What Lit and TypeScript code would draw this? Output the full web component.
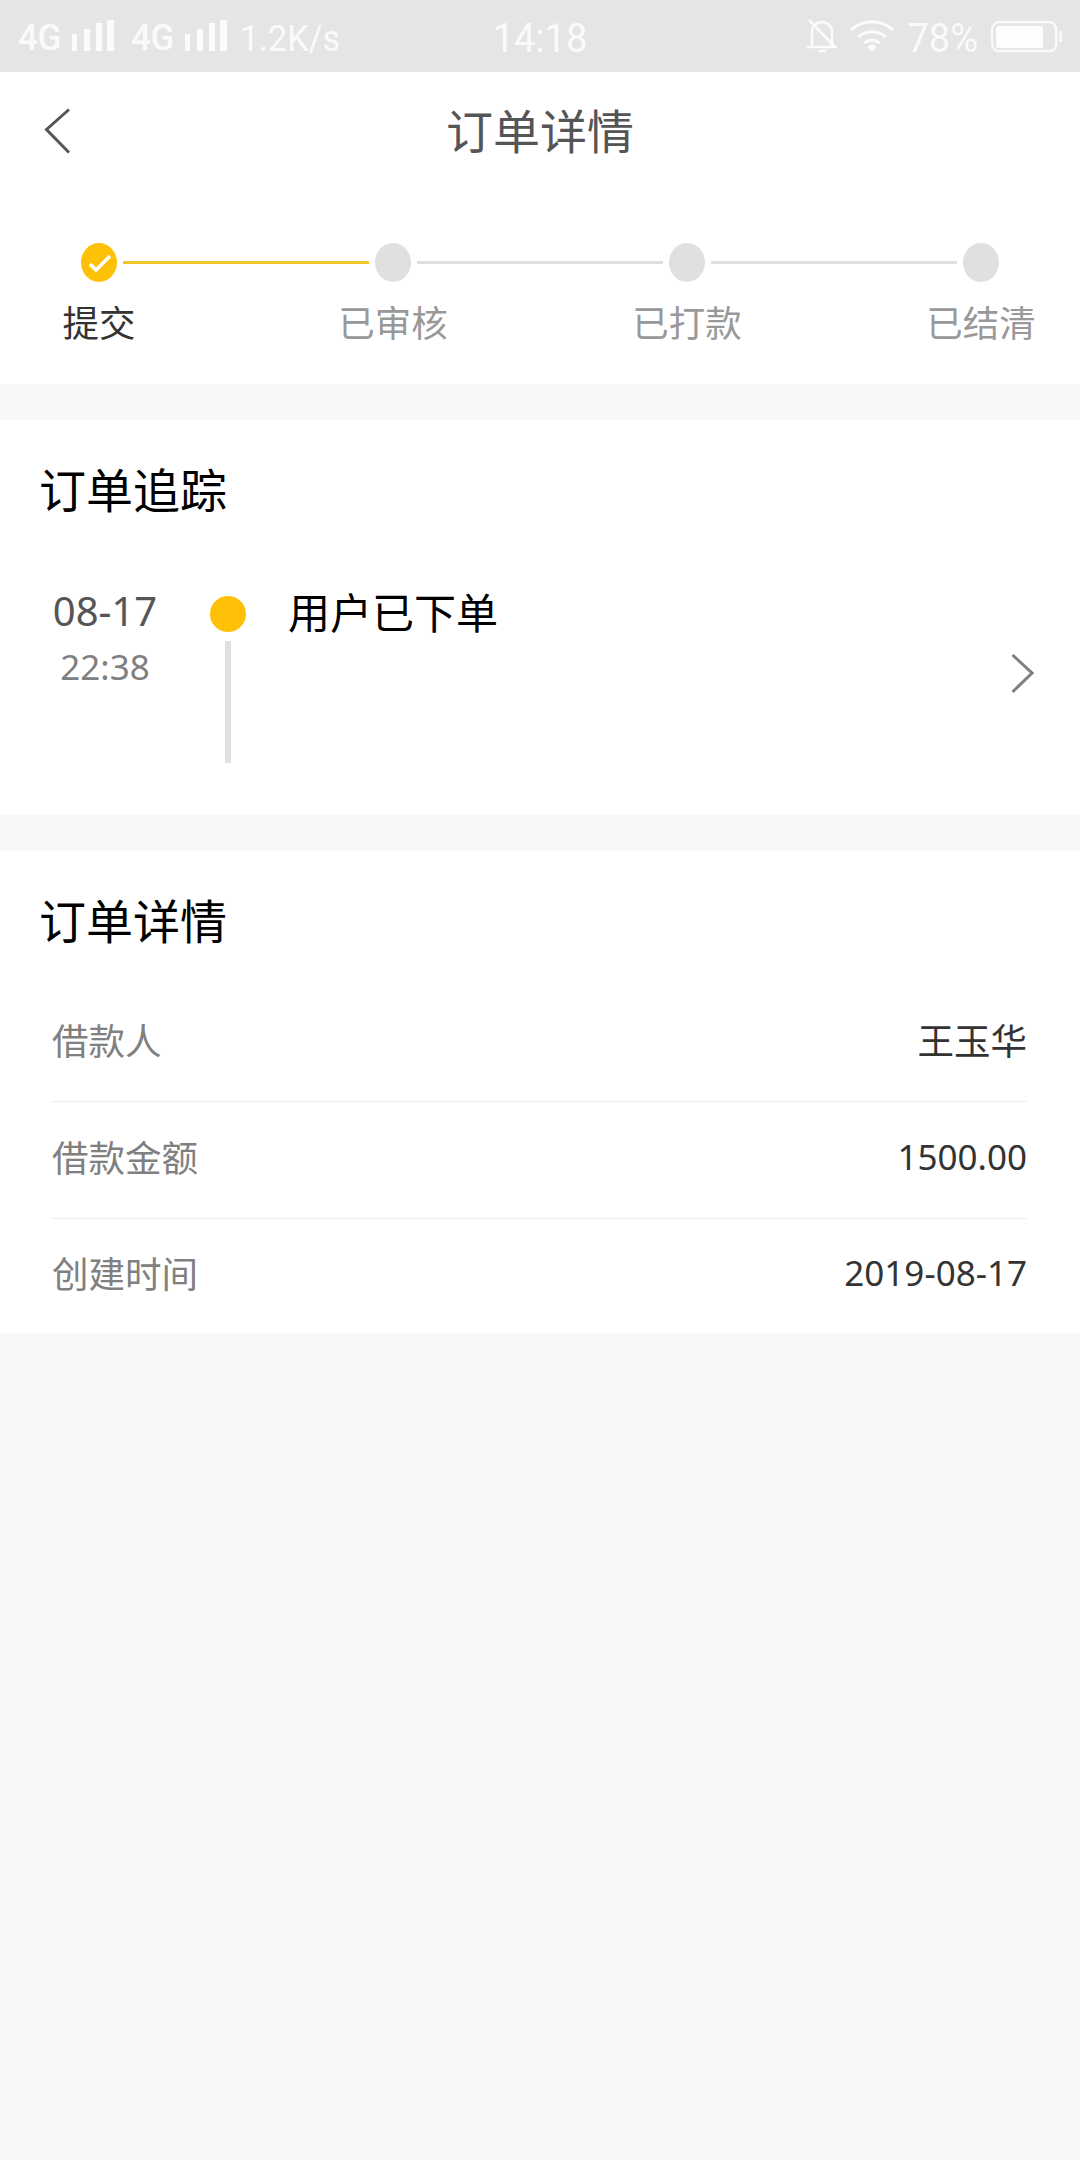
import { LitElement, html, css, svg } from "lit";
import { customElement } from "lit/decorators.js";

const bars = svg`<svg class="bars" viewBox="0 0 42 32" width="42" height="32"><path fill="#fff" fill-opacity=".85" d="M0 15h5v17H0zM12 10h6v22h-6zM24 4h6v28h-6zM35 1h7v31h-7z"/></svg>`;

const steps = [
  { label: "提交", done: true },
  { label: "已审核", done: false },
  { label: "已打款", done: false },
  { label: "已结清", done: false },
];

const details = [
  { k: "借款人", v: "王玉华" },
  { k: "借款金额", v: "1500.00" },
  { k: "创建时间", v: "2019-08-17" },
];

@customElement("app-root")
export class AppRoot extends LitElement {
  static styles = css`
    :host {
      display: block;
      width: 1080px;
      height: 2160px;
      background: #f8f8f8;
      font-family: "Noto Sans", "Noto Sans CJK SC", sans-serif;
      overflow: hidden;
    }
    .status {
      height: 72px;
      background: #e5e5e5;
      display: grid;
      grid-template-columns: 1fr auto 1fr;
      align-items: center;
      font-family: Roboto, "Noto Sans", sans-serif;
      color: rgba(255, 255, 255, 0.85);
    }
    .s-left { display: flex; align-items: center; padding-left: 18px; }
    .net { font-weight: 500; font-size: 35px; width: 44px; letter-spacing: -0.5px; display: inline-block; transform: scaleY(1.08); margin-top: 3px; }
    .bars { margin-left: 10px; margin-top: -2px; }
    .b2 { margin-left: 17px; }
    .speed { margin-left: 13px; font-size: 34px; transform: scaleY(1.08); margin-top: 3px; }
    .clock { font-size: 38px; transform: scaleY(1.08); margin-top: 3px; }
    .s-right { display: flex; align-items: center; justify-content: flex-end; padding-right: 17px; }
    .pct { font-size: 38px; margin: 3px 0 0 12px; transform: scaleY(1.05); }
    .bell { margin-right: 11px; }
    .batt { margin-left: 13px; margin-top: 1px; }

    .top { background: #fff; height: 312px; }
    .nav {
      height: 118px;
      display: grid;
      grid-template-columns: 1fr auto 1fr;
      align-items: center;
    }
    .back { margin-left: 44px; display: block; }
    .nav-title { font-size: 47px; line-height: 58px; color: #555; font-weight: 400; }

    .steps {
      display: grid;
      grid-template-columns: 36px 1fr 36px 1fr 36px 1fr 36px;
      padding: 53px 81px 0;
      align-items: center;
    }
    .dot {
      width: 36px;
      height: 39px;
      border-radius: 50%;
      background: #e0e0e0;
      display: flex;
      align-items: center;
      justify-content: center;
    }
    .dot.on { background: #ffc107; }
    .line { height: 3px; background: #e0e0e0; margin: 0 6px; }
    .line.on { background: #f0c62c; }
    .lab {
      grid-row: 2;
      justify-self: center;
      white-space: nowrap;
      font-size: 36.5px;
      line-height: 48px;
      color: #999;
      margin-top: 17px;
    }
    .lab.on { color: #333; }

    .card { background: #fff; margin-top: 36px; }
    .card-title { font-size: 47px; line-height: 58px; color: #000; }
    .track { padding: 41px 0 52px 39px; }
    .tr-row { display: flex; align-items: flex-start; margin-top: 72px; }
    .when { width: 132px; text-align: center; }
    .date { font-size: 40px; line-height: 40px; color: #555; }
    .time { font-size: 35px; line-height: 40px; color: #808080; margin-top: 16px; }
    .axis { width: 36px; margin-left: 39px; padding-top: 5px; display: flex; flex-direction: column; align-items: center; }
    .adot { width: 36px; height: 36px; border-radius: 50%; background: #ffc107; }
    .aline { width: 6px; height: 122px; background: #e0e0e0; margin-top: 9px; }
    .what { flex: 1; margin-left: 42px; font-size: 42px; line-height: 44px; color: #000; }
    .chev { margin: 63px 46px 0 0; display: block; }

    .info { padding: 41px 0 0 39px; }
    .list { margin: 35px 53px 0 12px; }
    .row {
      height: 117px;
      box-sizing: border-box;
      padding-bottom: 8px;
      padding-left: 1px;
      border-bottom: 1.5px solid #eeeeee;
      display: flex;
      justify-content: space-between;
      align-items: center;
      font-size: 36.5px;
    }
    .row:last-child { border-bottom: none; height: 114px; padding-bottom: 7px; }
    .k { color: #808080; }
    .v { color: #333; }
    .num { font-size: 35px; }
  `;

  render() {
    return html`
      <div class="status">
        <div class="s-left">
          <span class="net">4G</span>${bars}
          <span class="net b2">4G</span>${bars}
          <span class="speed">1.2K/s</span>
        </div>
        <div class="clock">14:18</div>
        <div class="s-right">
          <svg class="bell" width="32" height="36" viewBox="0 0 32 36" fill="none" stroke="#fff" stroke-opacity=".85" stroke-width="2.6">
            <path d="M1 29h30M6 29V14a10 10 0 0 1 20 0v15M12 33h8" />
            <path d="M3 2l26 27" />
          </svg>
          <svg width="46" height="34" viewBox="0 0 46 34" fill="none" stroke="#fff" stroke-opacity=".85" stroke-width="3.2">
            <path d="M2 11c12-11 30-11 42 0M9 18c8-7 20-7 28 0M15.500 24c4.500-3.500 10.500-3.500 15 0" />
            <path d="M18 28l5-3 5 3-5 5z" fill="#fff" fill-opacity=".85" stroke="none" />
          </svg>
          <span class="pct">78%</span>
          <svg class="batt" width="72" height="32" viewBox="0 0 72 32" fill="none">
            <rect x="1.200" y="1.200" width="64" height="29" rx="7" stroke="#fff" stroke-opacity=".85" stroke-width="2.2" />
            <rect x="5" y="5" width="47" height="22" rx="2" fill="#fff" fill-opacity=".9" />
            <rect x="68" y="10" width="3" height="11" fill="#fff" fill-opacity=".7" />
          </svg>
        </div>
      </div>

      <div class="top">
        <div class="nav">
          <svg class="back" width="26" height="46" viewBox="0 0 26 46" fill="none" stroke="#555" stroke-width="3">
            <path d="M25 1.500L2.500 21.500L25 44.500" />
          </svg>
          <div class="nav-title">订单详情</div>
          <div></div>
        </div>
        <div class="steps">
          ${steps.map(
            (s, i) => html`
              <div class="dot ${s.done ? "on" : ""}">
                ${s.done
                  ? html`<svg width="28" height="24" viewBox="0 0 28 24" fill="none" stroke="#fff" stroke-width="3.600"><path d="M5 13l6 6L25 5" /></svg>`
                  : ""}
              </div>
              ${i < steps.length - 1 ? html`<div class="line ${s.done ? "on" : ""}"></div>` : ""}
            `
          )}
          ${steps.map(
            (s, i) => html`<div class="lab ${s.done ? "on" : ""}" style="grid-column:${i * 2 + 1}">${s.label}</div>`
          )}
        </div>
      </div>

      <div class="card track">
        <div class="card-title">订单追踪</div>
        <div class="tr-row">
          <div class="when">
            <div class="date">08-17</div>
            <div class="time">22:38</div>
          </div>
          <div class="axis">
            <div class="adot"></div>
            <div class="aline"></div>
          </div>
          <div class="what">用户已下单</div>
          <svg class="chev" width="23" height="40" viewBox="0 0 23 40" fill="none" stroke="#808080" stroke-width="3">
            <path d="M1.500 1L21 19L1.500 38" />
          </svg>
        </div>
      </div>

      <div class="card info">
        <div class="card-title">订单详情</div>
        <div class="list">
          ${details.map(
            (d) => html`<div class="row"><span class="k">${d.k}</span><span class="v ${/\d/.test(d.v) ? "num" : ""}">${d.v}</span></div>`
          )}
        </div>
      </div>
    `;
  }
}
